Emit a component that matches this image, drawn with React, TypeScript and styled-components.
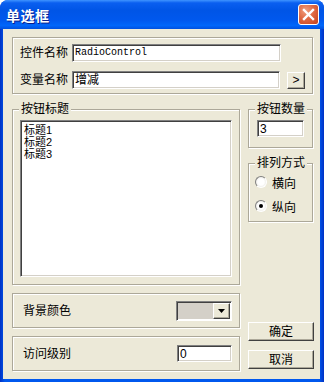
import styled, { createGlobalStyle } from "styled-components";

const GlobalStyle = createGlobalStyle`
  html, body {
    margin: 0;
    padding: 0;
    background: #ffffff;
  }
  * {
    box-sizing: border-box;
  }
`;

const FONT = `"Liberation Sans", "Noto Sans CJK SC", sans-serif`;

export default function App() {
  return (
    <>
      <GlobalStyle />
      <Window>
        <TitleBar>
          <Title>单选框</Title>
          <CloseButton aria-label="close">
            <svg width="13" height="13" viewBox="0 0 13 13">
              <path d="M2 2 L11 11 M11 2 L2 11" stroke="#fff" strokeWidth="2.4" strokeLinecap="square" />
            </svg>
          </CloseButton>
        </TitleBar>
        <Body>
          <NameGroup>
            <FieldRow>
              <FieldLabel>控件名称</FieldLabel>
              <TextBox $width={209} $mono>RadioControl</TextBox>
            </FieldRow>
            <FieldRow>
              <FieldLabel>变量名称</FieldLabel>
              <TextBox $width={209}>增减</TextBox>
              <SmallButton>&gt;</SmallButton>
            </FieldRow>
          </NameGroup>

          <MainRow>
            <LeftColumn>
              <Group $height={176} $pad="10px 7px 7px 7px">
                <Legend>按钮标题</Legend>
                <ListBox>
                  <ListItem>标题1</ListItem>
                  <ListItem>标题2</ListItem>
                  <ListItem>标题3</ListItem>
                </ListBox>
              </Group>
              <InlineGroup>
                <InlineLabel>背景颜色</InlineLabel>
                <ColorCombo>
                  <Swatch />
                  <DropButton>
                    <svg width="7" height="4" viewBox="0 0 7 4">
                      <path d="M0 0 H7 L3.5 4 Z" fill="#000" />
                    </svg>
                  </DropButton>
                </ColorCombo>
              </InlineGroup>
              <InlineGroup>
                <InlineLabel>访问级别</InlineLabel>
                <TextBox $width={55} $height={17}>0</TextBox>
              </InlineGroup>
            </LeftColumn>

            <RightColumn>
              <Group $height={39} $pad="10px 8px 0 8px">
                <Legend>按钮数量</Legend>
                <TextBox $width={47} $height={17}>3</TextBox>
              </Group>
              <Group $height={59} $pad="10px 6px 0 6px" $top={15}>
                <Legend>排列方式</Legend>
                <RadioRow>
                  <RadioDot />
                  <span>横向</span>
                </RadioRow>
                <RadioRow>
                  <RadioDot $checked />
                  <span>纵向</span>
                </RadioRow>
              </Group>
              <DialogButton $auto>确定</DialogButton>
              <DialogButton>取消</DialogButton>
            </RightColumn>
          </MainRow>
        </Body>
      </Window>
    </>
  );
}

const Window = styled.div`
  width: 324px;
  height: 382px;
  display: flex;
  flex-direction: column;
  border-radius: 8px 8px 0 0;
  overflow: hidden;
  background: linear-gradient(to right, #0031c4 0%, #0058ee 1.5%, #0058ee 98.5%, #0031c4 100%);
  font-family: ${FONT};
  font-size: 12px;
  color: #000;
`;

const TitleBar = styled.div`
  height: 29px;
  flex-shrink: 0;
  display: flex;
  align-items: center;
  justify-content: space-between;
  padding: 0 5px 0 6px;
  background: linear-gradient(
    to bottom,
    #3f94ff 0%,
    #0a5ff0 10%,
    #0055e6 35%,
    #0058ee 70%,
    #0066fa 88%,
    #0050df 100%
  );
`;

const Title = styled.span`
  color: #ffffff;
  font-family: "Noto Sans CJK SC", sans-serif;
  font-weight: 700;
  font-size: 14px;
  letter-spacing: 0.5px;
  text-shadow: 1px 1px 0 #0a1e8c;
  padding-top: 1px;
`;

const CloseButton = styled.div`
  width: 21px;
  height: 21px;
  border: 1px solid #ffffff;
  border-radius: 3px;
  display: flex;
  align-items: center;
  justify-content: center;
  background: radial-gradient(circle at 35% 30%, #f0a080 0%, #e06a44 45%, #c2401c 100%);
`;

const Body = styled.div`
  flex: 1;
  margin: 0 4px 4px 3px;
  background: #ece9d8;
  padding: 8px 7px 8px 9px;
  display: flex;
  flex-direction: column;
`;

const Etched = styled.div`
  position: relative;
  border: 1px solid #aca899;
  box-shadow: inset 1px 1px 0 #ffffff, 1px 1px 0 #ffffff;
`;

const NameGroup = styled(Etched)`
  height: 57px;
  padding: 6px 7px 0 7px;
  display: flex;
  flex-direction: column;
  gap: 9px;
`;

const FieldRow = styled.div`
  display: flex;
  align-items: center;
`;

const FieldLabel = styled.span`
  width: 52px;
  flex-shrink: 0;
  line-height: 14px;
  white-space: nowrap;
`;

const TextBox = styled.div<{ $width: number; $height?: number; $mono?: boolean }>`
  width: ${({ $width }) => $width}px;
  height: ${({ $height }) => $height ?? 18}px;
  background: #ffffff;
  border-style: solid;
  border-width: 1px;
  border-color: #808080 #ffffff #ffffff #808080;
  box-shadow: inset 1px 1px 0 #404040, inset -1px -1px 0 #d4d0c8;
  padding: 0 2px;
  display: flex;
  align-items: center;
  font-family: ${({ $mono }) => ($mono ? `"Liberation Mono", monospace` : FONT)};
  font-size: ${({ $mono }) => ($mono ? "10px" : "12px")};
  line-height: 14px;
  white-space: nowrap;
  overflow: hidden;
`;

const SmallButton = styled.div`
  width: 18px;
  height: 17px;
  margin-left: 7px;
  background: #ece9d8;
  border-style: solid;
  border-width: 1px;
  border-color: #ffffff #404040 #404040 #ffffff;
  box-shadow: inset -1px -1px 0 #aca899;
  display: flex;
  align-items: center;
  justify-content: center;
  font-family: "Liberation Sans", sans-serif;
  font-size: 12px;
  line-height: 12px;
`;

const MainRow = styled.div`
  margin-top: 15px;
  display: flex;
  gap: 8px;
  flex: 1;
`;

const LeftColumn = styled.div`
  width: 228px;
  display: flex;
  flex-direction: column;
  gap: 8px;
`;

const RightColumn = styled.div`
  width: 65px;
  display: flex;
  flex-direction: column;
`;

const Group = styled(Etched)<{ $height: number; $pad: string; $top?: number }>`
  height: ${({ $height }) => $height}px;
  padding: ${({ $pad }) => $pad};
  margin-top: ${({ $top }) => $top ?? 0}px;
  flex-shrink: 0;
`;

const Legend = styled.span`
  position: absolute;
  top: -8px;
  left: 6px;
  padding: 0 2px;
  background: #ece9d8;
  line-height: 14px;
  white-space: nowrap;
`;

const ListBox = styled.div`
  width: 212px;
  height: 157px;
  background: #ffffff;
  border-style: solid;
  border-width: 1px;
  border-color: #808080 #ffffff #ffffff #808080;
  box-shadow: inset 1px 1px 0 #404040, inset -1px -1px 0 #d4d0c8;
  padding: 3px 3px;
`;

const ListItem = styled.div`
  font-size: 11px;
  line-height: 12px;
  height: 12px;
  overflow: visible;
`;

const InlineGroup = styled(Etched)`
  height: 35px;
  flex-shrink: 0;
  display: flex;
  align-items: center;
  justify-content: space-between;
  padding: 0 7px 0 10px;
`;

const InlineLabel = styled.span`
  line-height: 14px;
`;

const ColorCombo = styled.div`
  width: 56px;
  height: 20px;
  border-style: solid;
  border-width: 1px;
  border-color: #808080 #ffffff #ffffff #808080;
  box-shadow: inset 1px 1px 0 #404040;
  padding: 1px 1px 1px 1px;
  display: flex;
  background: #ffffff;
`;

const Swatch = styled.div`
  flex: 1;
  background: #d4d0c8;
`;

const DropButton = styled.div`
  width: 17px;
  background: #ece9d8;
  border-style: solid;
  border-width: 1px;
  border-color: #ffffff #404040 #404040 #ffffff;
  box-shadow: inset -1px -1px 0 #aca899;
  display: flex;
  align-items: center;
  justify-content: center;
`;

const RadioRow = styled.div`
  display: flex;
  align-items: center;
  gap: 5px;
  height: 14px;
  margin-top: 1px;
  & + & {
    margin-top: 10px;
  }
`;

const RadioDot = styled.span<{ $checked?: boolean }>`
  width: 12px;
  height: 12px;
  border-radius: 50%;
  flex-shrink: 0;
  border: 1px solid;
  border-color: #808080 #ffffff #ffffff #808080;
  background: radial-gradient(circle at 50% 50%, #ffffff 0%, #ffffff 45%, #dcdad0 100%);
  display: flex;
  align-items: center;
  justify-content: center;
  &::after {
    content: "";
    width: 4px;
    height: 4px;
    border-radius: 50%;
    background: #000;
    display: ${({ $checked }) => ($checked ? "block" : "none")};
  }
`;

const DialogButton = styled.div<{ $auto?: boolean }>`
  height: 19px;
  margin-top: ${({ $auto }) => ($auto ? "auto" : "9px")};
  margin-bottom: ${({ $auto }) => ($auto ? "0" : "2px")};
  width: 66px;
  background: #ece9d8;
  border-style: solid;
  border-width: 1px;
  border-color: #ffffff #404040 #404040 #ffffff;
  box-shadow: inset -1px -1px 0 #aca899;
  display: flex;
  align-items: center;
  justify-content: center;
  line-height: 14px;
`;
